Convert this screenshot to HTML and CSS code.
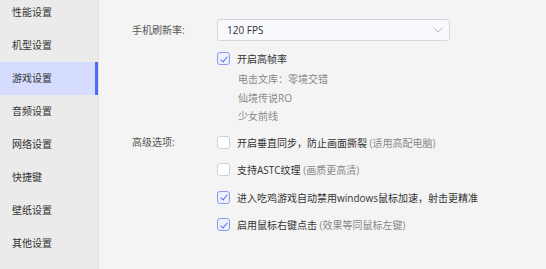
FILE: index.html
```html
<!DOCTYPE html>
<html lang="zh-CN">
<head>
    <meta charset="UTF-8">
    <title>设置</title>
    <link rel="stylesheet" href="styles.css">
</head>
<body>
    <div class="layout">
        <ul class="side-menu">
            <li class="menu-item">性能设置</li>
            <li class="menu-item">机型设置</li>
            <li class="menu-item active">游戏设置</li>
            <li class="menu-item">音频设置</li>
            <li class="menu-item">网络设置</li>
            <li class="menu-item">快捷键</li>
            <li class="menu-item">壁纸设置</li>
            <li class="menu-item">其他设置</li>
        </ul>

        <div class="panel">
            <div class="form-row">
                <div class="form-label">手机刷新率:</div>
                <div class="form-control">
                    <div class="select">
                        <span>120 FPS</span>
                        <svg class="chevron" width="10" height="6" viewBox="0 0 10 6">
                            <path d="M0.5 0.5 L5 5 L9.5 0.5" fill="none" stroke="#b8bac2" stroke-width="1"/>
                        </svg>
                    </div>
                    <label class="check-row first">
                        <span class="checkbox checked"></span>
                        <span class="check-text">开启高帧率</span>
                    </label>
                    <ul class="game-list">
                        <li>电击文库：零境交错</li>
                        <li>仙境传说RO</li>
                        <li>少女前线</li>
                    </ul>
                </div>
            </div>

            <div class="form-row advanced">
                <div class="form-label">高级选项:</div>
                <div class="form-control">
                    <label class="check-row">
                        <span class="checkbox"></span>
                        <span class="check-text">开启垂直同步，防止画面撕裂 <em>(适用高配电脑)</em></span>
                    </label>
                    <label class="check-row">
                        <span class="checkbox"></span>
                        <span class="check-text">支持ASTC纹理 <em>(画质更高清)</em></span>
                    </label>
                    <label class="check-row">
                        <span class="checkbox checked"></span>
                        <span class="check-text">进入吃鸡游戏自动禁用windows鼠标加速，射击更精准</span>
                    </label>
                    <label class="check-row">
                        <span class="checkbox checked"></span>
                        <span class="check-text">启用鼠标右键点击 <em>(效果等同鼠标左键)</em></span>
                    </label>
                </div>
            </div>
        </div>
    </div>
</body>
</html>
```

FILE: styles.css
```css
* {
    box-sizing: border-box;
    margin: 0;
    padding: 0;
}

body {
    font-family: "Open Sans", "Noto Sans CJK SC", sans-serif;
    font-size: 10px;
    color: #333;
    background: #f4f4f4;
    width: 546px;
    height: 269px;
    overflow: hidden;
}

.layout {
    display: flex;
    height: 269px;
}

.side-menu {
    list-style: none;
    width: 99px;
    flex-shrink: 0;
    background: #ebebeb;
    border-right: 1px solid #e2e2e2;
    margin-top: -4px;
    height: 273px;
}

.menu-item {
    height: 33px;
    line-height: 33px;
    padding-left: 12px;
    color: #333;
}

.menu-item.active {
    background: #d5dcff;
    box-shadow: inset -3px 0 0 #4e6cf4;
}

.panel {
    flex: 1;
    padding: 19px 0 0 33px;
}

.form-row {
    display: flex;
}

.form-label {
    width: 85px;
    color: #555;
    line-height: 22px;
}

.form-control {
    flex: 1;
}

.select {
    width: 233px;
    height: 22px;
    background: #f8f9fd;
    border: 1px solid #d5d7e0;
    border-radius: 3px;
    display: flex;
    align-items: center;
    justify-content: space-between;
    padding: 0 6px 0 9px;
    color: #333;
}

.check-row {
    display: flex;
    align-items: center;
    gap: 7px;
    height: 27.5px;
}

.check-row.first {
    height: 13px;
    margin-top: 11px;
}

.checkbox {
    width: 13px;
    height: 13px;
    border: 1px solid #cdd0dc;
    border-radius: 3px;
    background: #fff;
    flex-shrink: 0;
    position: relative;
}

.checkbox.checked {
    border-color: #8c9af0;
    background: #eef0fd;
}

.checkbox.checked::after {
    content: '';
    position: absolute;
    left: 3.5px;
    top: 1.5px;
    width: 3px;
    height: 6px;
    border-right: 1.5px solid #5b6fe6;
    border-bottom: 1.5px solid #5b6fe6;
    transform: rotate(40deg);
}

.check-text {
    color: #333;
    white-space: nowrap;
}

.check-text em {
    font-style: normal;
    color: #888;
}

.game-list {
    list-style: none;
    padding-left: 21px;
    margin-top: 5px;
}

.game-list li {
    height: 18.5px;
    line-height: 18.5px;
    color: #888;
}

.advanced {
    margin-top: 3px;
}

.advanced .form-label {
    line-height: 27.5px;
}
```
